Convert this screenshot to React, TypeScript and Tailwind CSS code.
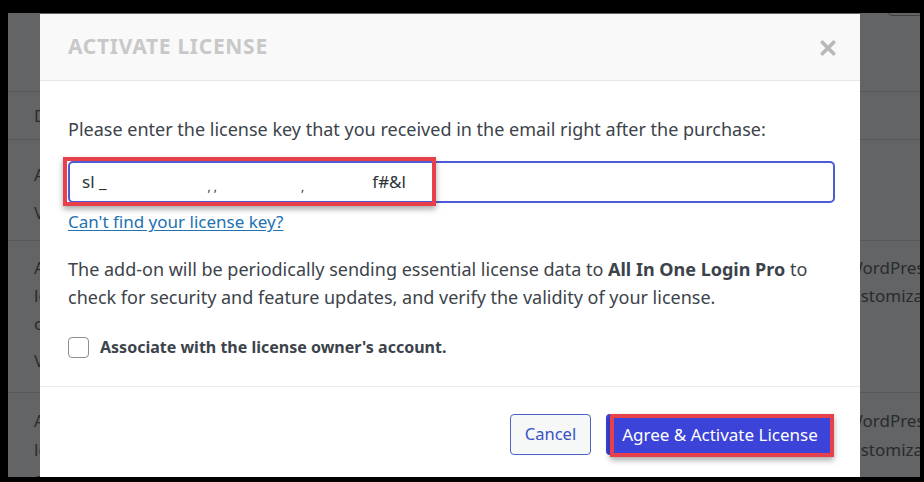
import React from 'react'

const FONT = { fontFamily: '"Noto Sans", "Open Sans", Arial, sans-serif' }

function BackgroundTable() {
  return (
    <div className="flex flex-col text-[17px] text-[#2a2b2d]">
      {/* top bar of the page */}
      <div className="h-[79px] border-b border-[#57585a] relative">
        <div className="absolute right-[-2px] top-[-14px] w-[34px] h-[17px] rounded-[4px] border border-[#3f4042]" />
      </div>
      <div className="h-[48px] border-b border-[#57585a] pl-[26px] flex items-center">Description</div>
      <div className="h-[101px] border-b border-[#57585a] flex">
        <div className="w-[450px] shrink-0 pl-[26px] pt-[16px] leading-[38px] flex flex-col">
          <span>All In One Login</span>
          <span>Version 1.2</span>
        </div>
        <div className="flex-1" />
      </div>
      <div className="h-[152px] border-b border-[#57585a] flex">
        <div className="w-[450px] shrink-0 pl-[26px] pt-[13px] leading-[28px] flex flex-col">
          <span>Adds extra security</span>
          <span>login page</span>
          <span>customization</span>
          <span className="mt-[9px]">Version 1.0</span>
        </div>
        <div className="flex-1 min-w-0 pt-[13px] leading-[28px] flex flex-col whitespace-nowrap">
          <span className="pl-[389px]">WordPress</span>
          <span className="pl-[384px]">customization</span>
        </div>
      </div>
      <div className="h-[120px] flex">
        <div className="w-[450px] shrink-0 pl-[26px] pt-[13px] leading-[29px] flex flex-col">
          <span>Adds extra security</span>
          <span>login page</span>
          <span>customization</span>
        </div>
        <div className="flex-1 min-w-0 pt-[13px] leading-[29px] flex flex-col whitespace-nowrap">
          <span className="pl-[389px]">WordPress</span>
          <span className="pl-[384px]">customization</span>
        </div>
      </div>
    </div>
  )
}

function ActivateModal() {
  return (
    <div className="absolute left-[32px] top-[1px] w-[820px] bg-white text-[#3c434a]">
      {/* Header */}
      <div className="h-[67px] bg-[#f9f9f9] border-b border-[#e6e6e6] flex items-center justify-between pl-[28px] pr-[24px]">
        <h2 className="text-[21px] font-bold tracking-[0.7px] text-[#c8c8c8]">ACTIVATE LICENSE</h2>
        <svg width="16" height="16" viewBox="0 0 16 16" className="mt-[2px]">
          <path d="M2.5 2.5 L13.5 13.5 M13.5 2.5 L2.5 13.5" stroke="#b8b8b8" strokeWidth="3.6" strokeLinecap="square" />
        </svg>
      </div>

      {/* Body */}
      <div className="pl-[28px] pr-[25px] pt-[34px] pb-[27px] border-b border-[#ececec] text-[18px]">
        <p className="leading-[28px]">Please enter the license key that you received in the email right after the purchase:</p>
        <div className="relative mt-[18px]">
          <div className="h-[42px] rounded-[5px] border-2 border-[#4c5bd4] flex items-center pl-[12px] text-[17px] text-[#2c3338]">
            <span>sl _</span>
            <span className="ml-[101px] text-[12px] mt-[10px]">, ,</span>
            <span className="ml-[84px] text-[12px] mt-[10px]">,</span>
            <span className="ml-[68px]">f#&amp;l</span>
          </div>
          <div className="absolute left-[-5px] top-[-4px] w-[373px] h-[49px] border-[4px] border-[#e8404a] shadow-[0_3px_6px_rgba(0,0,0,0.35)]" />
        </div>
        <a href="#" className="block mt-[7px] w-max leading-[24px] text-[17px] text-[#2271b1] underline underline-offset-2">Can't find your license key?</a>
        <p className="mt-[21px] leading-[28px]">
          The add-on will be periodically sending essential license data to <b className="font-bold text-[#3c434a]">All In One Login Pro</b> to check for security and feature updates, and verify the validity of your license.
        </p>
        <label className="mt-[24px] flex items-center gap-[11px]">
          <span className="w-[21px] h-[21px] rounded-[4px] border border-[#8c8f94] bg-white shrink-0" />
          <span className="font-bold text-[16px] text-[#3c434a]">Associate with the license owner's account.</span>
        </label>
      </div>

      {/* Footer */}
      <div className="pt-[27px] pb-[30px] pr-[28px] flex justify-end gap-[15px]">
        <button className="w-[81px] h-[41px] rounded-[4px] border border-[#4c63c8] bg-[#f6f7f7] text-[#3a52c4] text-[16.5px]">Cancel</button>
        <div className="relative">
          <button className="w-[226px] h-[41px] rounded-[4px] bg-[#3b43d8] text-white text-[17px] pl-[2px]">Agree &amp; Activate License</button>
          <div className="absolute left-[4px] top-[0px] right-[-2px] bottom-[-2px] border-[4px] border-[#e8404a] shadow-[0_3px_6px_rgba(0,0,0,0.35)]" />
        </div>
      </div>
    </div>
  )
}

export default function App() {
  return (
    <div style={FONT} className="w-[924px] h-[482px] bg-black pt-[13px] pl-[8px] pr-[4px] pb-[5px]">
      <div className="relative w-full h-full bg-[#636466] overflow-hidden">
        <BackgroundTable />
        <ActivateModal />
      </div>
    </div>
  )
}
